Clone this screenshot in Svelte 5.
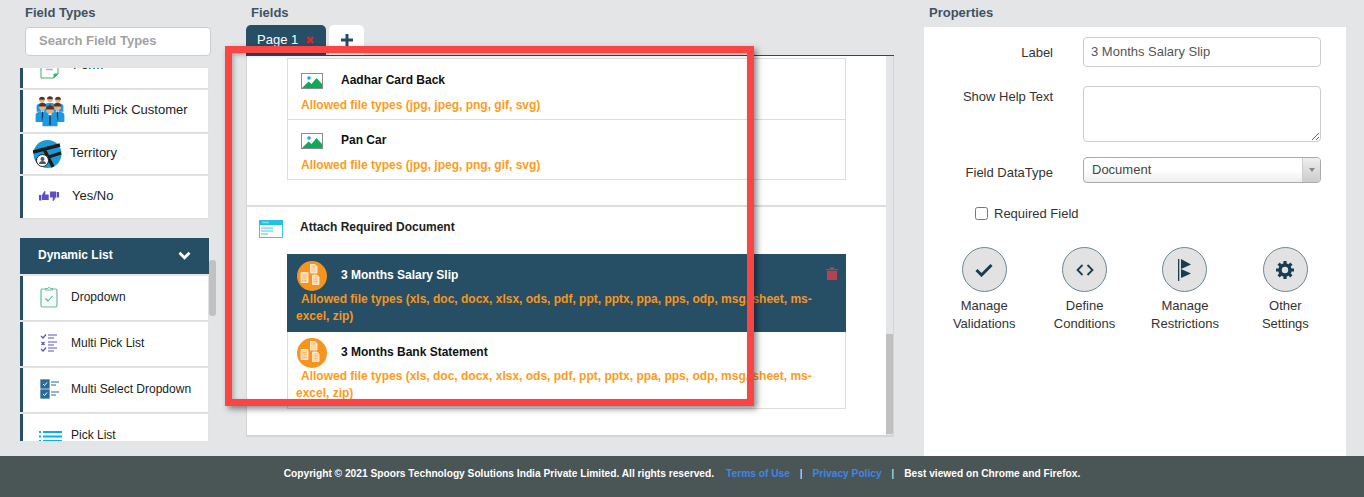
<script lang="ts">
  const imageFields = [{ name: 'Aadhar Card Back' }, { name: 'Pan Car' }];
  const imageTypes = 'Allowed file types (jpg, jpeg, png, gif, svg)';
  const docTypes =
    'Allowed file types (xls, doc, docx, xlsx, ods, pdf, ppt, pptx, ppa, pps, odp, msg, sheet, ms-excel, zip)';
  const docFields = [
    { name: '3 Months Salary Slip', active: true },
    { name: '3 Months Bank Statement', active: false }
  ];
  const actions = [
    { icon: 'check', lines: ['Manage', 'Validations'] },
    { icon: 'code', lines: ['Define', 'Conditions'] },
    { icon: 'flag', lines: ['Manage', 'Restrictions'] },
    { icon: 'gear', lines: ['Other', 'Settings'] }
  ];
</script>

{#snippet person(x, y, s)}
  <path d="M{x - 6 * s} {y + 13 * s}v{-6 * s}q0 {-3 * s} {6 * s} {-3.400 * s}q{6 * s} {0.400 * s} {6 * s} {3.400 * s}v{6 * s}z" fill="#1f9ae0" />
  <path d="M{x - 1.500 * s} {y + 3 * s}h{3 * s}l{-1.500 * s} {3 * s}z" fill="#fff" />
  <path d="M{x - 0.600 * s} {y + 4 * s}h{1.200 * s}v{8 * s}h{-1.200 * s}z" fill="#123a5c" />
  <circle cx={x} cy={y} r={3 * s} fill="#e8b088" />
  <path d="M{x - 3.200 * s} {y - 0.400 * s}a{3.200 * s} {3.200 * s} 0 0 1 {6.400 * s} 0z" fill="#5a3320" />
{/snippet}

<div class="page">
  <main class="main">
    <section class="left">
      <div class="title">Field Types</div>
      <div class="search">Search Field Types</div>
      <div class="types">
        <div class="list">
          <div class="type form-row">
            <svg class="form-icon" width="20" height="11" viewBox="0 0 20 11">
              <path d="M1 0v10h13l4-4V0" fill="none" stroke="#3bb56c" stroke-width="1" />
              <path d="M6 1.500h7" stroke="#b5b5b5" stroke-width="1.600" />
              <path d="M14 10V6h4" fill="#3bb56c" stroke="#3bb56c" />
            </svg>
            <span>Form</span>
          </div>
          <div class="type h42 big">
            <svg class="ic-people" width="32" height="31" viewBox="0 0 32 31">
              {@render person(8, 4, 0.9)}
              {@render person(16, 3.500, 0.9)}
              {@render person(24, 4, 0.9)}
              {@render person(8.500, 11, 1.150)}
              {@render person(23.500, 11, 1.150)}
              {@render person(16, 14, 1.250)}
            </svg>
            <span class="t-customer">Multi Pick Customer</span>
          </div>
          <div class="type h40 big">
            <svg class="ic-territory" width="29" height="28" viewBox="0 0 29 28">
              <circle cx="14.500" cy="14" r="14" fill="#1b9ad6" />
              <path d="M0 12 L27 5 M3 21 L28 13 M11 9 L20 27" stroke="#1c1c1c" stroke-width="3.400" fill="none" />
              <circle cx="9.500" cy="20.500" r="6" fill="#fff" stroke="#222" />
              <circle cx="9.500" cy="19" r="2" fill="#555" />
              <path d="M6 24a3.500 3 0 0 1 7 0z" fill="#555" />
            </svg>
            <span class="t-territory">Territory</span>
          </div>
          <div class="type h42 big">
            <svg class="ic-thumbs" width="20" height="12" viewBox="0 0 20 12">
              <path d="M0 5h2.400v5.500H0zM3 5l2.500-4 1 .4-.4 3h3.600v5.600H3z" fill="#5a4fc4" />
              <path d="M20 2h-2.400v5.500H20zM11 1.500h6v5.500l-2.500 4-1-.4.400-3H11z" fill="#5a4fc4" />
            </svg>
            <span class="t-yes">Yes/No</span>
          </div>

          <div class="group">
            <span>Dynamic List</span>
            <svg width="13" height="9" viewBox="0 0 13 9">
              <path d="M1.500 1.800 6.500 6.800 11.500 1.800" fill="none" stroke="#fff" stroke-width="2.800" />
            </svg>
          </div>

          <div class="type h44">
            <svg class="ic" width="18" height="22" viewBox="0 0 18 22">
              <rect x="1" y="3" width="16" height="18" rx="1.500" fill="#f6fbf9" stroke="#6cb8a0" stroke-width="1.200" />
              <path d="M5.500 4V2.500h2.200a1.500 1.500 0 0 1 2.800 0h2V4z" fill="#fff" stroke="#6cb8a0" />
              <path d="M5.500 12.500 8 15l4.500-5" fill="none" stroke="#55b295" stroke-width="1.100" />
            </svg>
            <span>Dropdown</span>
          </div>
          <div class="type h44">
            <svg class="ic" width="18" height="20" viewBox="0 0 18 20">
              <path d="M1 3l2 2 3-3.500M1 16l2 2 3-3.500M1.500 9l3 3m0-3-3 3" fill="none" stroke="#5a4fc4" stroke-width="1.200" />
              <path d="M8 2h9M8 5h6M8 9h9M8 12h6M8 15h9M8 18h6" stroke="#5a4fc4" stroke-width="1.100" />
            </svg>
            <span>Multi Pick List</span>
          </div>
          <div class="type h44">
            <svg class="ic" width="20" height="20" viewBox="0 0 20 20">
              <rect x="1" y="1" width="8" height="8" fill="#2b6a94" stroke="#2b6a94" stroke-width="1.300" />
              <rect x="1" y="11" width="8" height="8" fill="#2b6a94" stroke="#2b6a94" stroke-width="1.300" />
              <path d="M3 5l1.500 1.500L7 3.500M3 15l1.500 1.500L7 13.500" fill="none" stroke="#fff" />
              <path d="M11 3h8M11 6h5M11 13h8M11 16h5" stroke="#2b6a94" stroke-width="1.100" />
            </svg>
            <span>Multi Select Dropdown</span>
          </div>
          <div class="type h44 last">
            <svg class="ic" width="23" height="16" viewBox="0 0 23 16">
              <path d="M0 2h2M4 2h19M0 6.500h2M4 6.500h19M0 11h2M4 11h19" stroke="#08aef0" stroke-width="2" />
            </svg>
            <span>Pick List</span>
          </div>
        </div>
        <div class="track"><div class="thumb"></div></div>
      </div>
    </section>

    <section class="center">
      <div class="title">Fields</div>
      <div class="tabs">
        <div class="tab active">Page 1 <span class="x">✖</span></div>
        <div class="tab add">
          <svg width="12" height="12" viewBox="0 0 12 12">
            <path d="M6 0v12M0 6h12" stroke="#264f66" stroke-width="3" />
          </svg>
        </div>
      </div>
      <div class="panel">
        <div class="content">
          <div class="card top-card">
            {#each imageFields as f}
              <div class="row image-row">
                <div class="row-head">
                  <svg class="pic" width="22" height="16" viewBox="0 0 22 16">
                    <rect x="0.500" y="0.500" width="21" height="15" fill="#fff" stroke="#8c8c8c" />
                    <circle cx="8" cy="5" r="1.800" fill="#17a9f0" />
                    <path d="M1 15 7.500 8.500 10.500 11 15.500 5 21 11v4z" fill="#0fa958" />
                  </svg>
                  <span class="name">{f.name}</span>
                </div>
                <div class="types-note image-note">{imageTypes}</div>
              </div>
            {/each}
          </div>
          <div class="divider"></div>
          <div class="section-head">
            <svg width="24" height="18" viewBox="0 0 24 18">
              <rect x="0.500" y="0.500" width="23" height="17" fill="#fff" stroke="#3cc7ea" />
              <rect x="0" y="0" width="24" height="5" fill="#22bfe6" />
              <path d="M3 2.500h7M2 8h12M2 11h12M2 14h7" stroke="#7fdcf2" stroke-width="1.400" />
            </svg>
            <span>Attach Required Document</span>
          </div>
          <div class="card doc-card">
            {#each docFields as f}
              <div class="row doc-row" class:active={f.active}>
                <div class="row-head">
                  <svg width="30" height="30" viewBox="0 0 30 30">
                    <circle cx="15" cy="15" r="15" fill="#f7941d" />
                    <path d="M4 11.500h7v10H4zM13.500 3.500H18l2 2V12h-6.500zM15.500 14H20l2 2v7.500h-6.500z" fill="#fbd7a8" stroke="#fff" stroke-width="0.700" />
                    <path d="M5.500 14.500h4M5.500 17h4M5.500 19.500h4M15.500 6h2.500M17.500 18h3M17.500 20.500h3" stroke="#f2b063" stroke-width="0.800" />
                  </svg>
                  <span class="name">{f.name}</span>
                  {#if f.active}
                    <svg class="trash" width="12" height="13" viewBox="0 0 12 13">
                      <path d="M0 2h12v1.300H0zM4 .3h4V2H4zM1 4h10v9H1z" fill="#b5434f" />
                    </svg>
                  {/if}
                </div>
                <div class="types-note doc-note">{docTypes}</div>
              </div>
            {/each}
          </div>
        </div>
        <div class="bar"><div class="bar-thumb"></div></div>
      </div>
    </section>

    <section class="right">
      <div class="title">Properties</div>
      <div class="props">
        <div class="form">
          <span class="lbl">Label</span>
          <input class="field" value="3 Months Salary Slip" />
          <span class="lbl help">Show Help Text</span>
          <textarea class="field area"></textarea>
          <span class="lbl dt">Field DataType</span>
          <div class="select">
            <span>Document</span>
            <div class="caret"><i></i></div>
          </div>
        </div>
        <label class="req"><input type="checkbox" /> <span>Required Field</span></label>
        <div class="actions">
          {#each actions as a}
            <div class="action">
              <div class="circle">
                {#if a.icon === 'check'}
                  <svg width="18" height="14" viewBox="0 0 18 14">
                    <path d="M1.500 7 6.500 12 16.500 2" fill="none" stroke="#183d52" stroke-width="3" />
                  </svg>
                {:else if a.icon === 'code'}
                  <svg width="18" height="12" viewBox="0 0 18 12">
                    <path d="M6.500 1 1.500 6l5 5M11.500 1l5 5-5 5" fill="none" stroke="#183d52" stroke-width="1.800" />
                  </svg>
                {:else if a.icon === 'flag'}
                  <svg width="14" height="22" viewBox="0 0 14 22">
                    <path d="M0 0h1.300v22H0z" fill="#183d52" />
                    <path d="M3 0l10 5.500L3 10zM3 10l10 4.500L3 19z" fill="#183d52" />
                  </svg>
                {:else}
                  <svg width="18" height="18" viewBox="0 0 18 18">
                    <circle cx="9" cy="9" r="5" fill="none" stroke="#183d52" stroke-width="3.600" />
                    <path d="M9 0v3M9 15v3M0 9h3M15 9h3M2.600 2.600l2.200 2.200M13.200 13.200l2.200 2.200M15.400 2.600l-2.200 2.200M4.800 13.200l-2.200 2.200" stroke="#183d52" stroke-width="3.200" />
                  </svg>
                {/if}
              </div>
              <div class="action-label">
                {#each a.lines as line}<div>{line}</div>{/each}
              </div>
            </div>
          {/each}
        </div>
      </div>
    </section>
  </main>

  <footer class="footer">
    <span>Copyright © 2021 Spoors Technology Solutions India Private Limited. All rights reserved.</span>
    <a class="first" href="#terms">Terms of Use</a>
    <span class="sep">|</span>
    <a href="#privacy">Privacy Policy</a>
    <span class="sep">|</span>
    <span>Best viewed on Chrome and Firefox.</span>
  </footer>

  <div class="highlight"></div>
</div>

<style>
  :global(body) { margin: 0; background: #e4e5e7; }
  .page {
    position: relative;
    height: 497px;
    overflow: hidden;
    display: flex;
    flex-direction: column;
    font-family: "Liberation Sans", Arial, sans-serif;
    font-size: 12px;
    color: #222;
  }
  .main { height: 456px; display: flex; align-items: flex-start; padding-left: 20px; }
  .title { font-weight: bold; color: #3d5364; line-height: 14px; padding: 6px 0 0 5px; height: 21px; font-size: 13px; }

  .left { width: 196px; }
  .search {
    margin: 0 0 12px 5px;
    width: 184px;
    height: 27px;
    border: 1px solid #ccc;
    border-radius: 4px;
    background: #fff;
    color: #a3a3a3;
    font-weight: bold;
    font-size: 13px;
    line-height: 26px;
    text-indent: 13px;
  }
  .types { display: flex; height: 373px; overflow: hidden; }
  .list { width: 189px; }
  .type {
    position: relative;
    display: flex;
    align-items: center;
    box-sizing: border-box;
    width: 188px;
    margin-bottom: 2px;
    padding-bottom: 2px;
    background: #fff;
    border-left: 3px solid #264f66;
    box-shadow: 0 1px 1px #ddd;
  }
  .big { font-size: 13px; padding-bottom: 4px; }
  .form-row { height: 20px; overflow: hidden; align-items: flex-start; padding-bottom: 0; font-size: 13px; }
  .form-icon { margin-left: 17px; flex: none; }
  .form-row span { margin: -11px 0 0 13px; }
  .h42 { height: 42px; }
  .h40 { height: 40px; }
  .h44 { height: 44px; }
  .last { height: 50px; align-items: flex-start; padding-top: 14px; }
  .last .ic { margin-left: 16px; margin-top: 2px; }
  .ic-people { margin: 4px 0 0 11px; flex: none; }
  .t-customer { margin-left: 6px; }
  .ic-territory { margin: 3px 0 0 10px; flex: none; }
  .t-territory { margin-left: 8px; }
  .ic-thumbs { margin: 2px 0 0 16px; flex: none; }
  .t-yes { margin-left: 13px; }
  .ic { margin-left: 17px; flex: none; }
  .type .ic + span { position: absolute; left: 48px; }
  .group {
    margin-top: 20px;
    margin-bottom: 2px;
    width: 189px;
    height: 36px;
    padding: 0 18px 2px;
    background: #264f66;
    color: #fff;
    font-weight: bold;
    display: flex;
    align-items: center;
    justify-content: space-between;
    box-sizing: border-box;
  }
  .track { width: 7px; }
  .thumb { margin-top: 192px; height: 56px; width: 7px; background: #c1c1c1; border-radius: 3px; }

  .center { width: 648px; margin-left: 30px; }
  .center .title { height: 19px; }
  .tabs { display: flex; gap: 3px; height: 30px; border-bottom: 1px solid #2c4a5a; }
  .tab { height: 30px; border-radius: 5px 5px 0 0; box-sizing: border-box; }
  .active.tab { width: 80px; background: #264f66; color: #fff; padding: 8px 0 0 11px; font-size: 13px; line-height: 14px; }
  .x { color: #d9232e; font-size: 11px; margin-left: 3px; }
  .add { width: 35px; background: #fff; display: flex; align-items: center; justify-content: center; }
  .panel {
    display: flex;
    height: 381px;
    background: #fff;
    border: 1px solid #d5d5d5;
    border-top: 0;
    border-bottom-width: 2px;
    box-sizing: border-box;
    overflow: hidden;
  }
  .content { flex: 1; padding-top: 2px; min-width: 0; }
  .card { margin: 0 40px; border: 1px solid #ddd; border-top: 0; box-sizing: border-box; }
  .top-card { border-top: 1px solid #ddd; height: 122px; }
  .row { box-sizing: border-box; }
  .image-row { height: 61px; border-bottom: 1px solid #ddd; padding-top: 14px; }
  .image-row:last-child { height: 59px; border-bottom: 0; padding-top: 13px; }
  .row-head { position: relative; display: flex; align-items: center; }
  .image-row .row-head { padding-left: 13px; height: 16px; }
  .name { font-weight: bold; color: #111; }
  .image-row .name { margin: -2px 0 0 18px; }
  .types-note { color: #fb9c1c; font-weight: bold; line-height: 17px; }
  .image-note { margin: 8px 0 0 13px; }
  .divider { margin-top: 25px; height: 2px; background: #ddd; }
  .section-head { display: flex; align-items: center; height: 40px; margin-bottom: 7px; padding-left: 12px; gap: 17px; font-weight: bold; color: #222; }
  .section-head svg { margin-top: 4px; }
  .doc-card { border-top: 0; height: 155px; border-bottom: 1px solid #ddd; }
  .doc-row { margin: 0 -1px; padding: 7px 8px 0 9px; height: 78px; }
  .doc-row + .doc-row { height: 76px; padding-top: 6px; }
  .doc-row .row-head { padding-left: 1px; height: 30px; }
  .doc-row .name { margin: -2px 0 0 14px; }
  .doc-row.active { background: #264f66; }
  .doc-row.active .name { color: #fff; }
  .doc-note { margin-top: 0; text-indent: 5px; }
  .doc-row.active .doc-note { color: #f7961d; }
  .trash { position: absolute; right: 0; top: 6px; }
  .bar { width: 7px; background: #e4e5e7; }
  .bar-thumb { margin-top: 278px; height: 100px; background: #c1c1c1; }

  .right { width: 422px; margin-left: 30px; }
  .props { height: 429px; background: #fff; padding: 10px 10px 0 10px; box-sizing: border-box; font-size: 13px; }
  .form { display: grid; grid-template-columns: 119px 238px; column-gap: 30px; align-items: start; }
  .lbl { text-align: right; color: #333; line-height: 14px; }
  .lbl:first-child { padding-top: 9px; }
  .help { padding-top: 4px; margin-top: 19px; }
  .dt { margin-top: 24px; }
  .field {
    box-sizing: border-box;
    width: 238px;
    height: 30px;
    padding: 0 7px 2px;
    border: 1px solid #ccc;
    border-radius: 4px;
    font: 13px "Liberation Sans", Arial, sans-serif;
    color: #555;
    outline: 0;
  }
  .area { height: 56px; margin-top: 19px; display: block; }
  .select {
    box-sizing: border-box;
    margin-top: 15px;
    height: 26px;
    border: 1px solid #aaa;
    border-radius: 4px;
    background: linear-gradient(#fff 50%, #eee);
    display: flex;
    justify-content: space-between;
    padding-left: 8px;
    line-height: 24px;
    color: #444;
  }
  .caret { width: 17px; border-left: 1px solid #ccc; background: linear-gradient(#eee, #ccc); display: flex; align-items: center; justify-content: center; border-radius: 0 3px 3px 0; }
  .caret i { border: 3.500px solid transparent; border-top: 4px solid #888; border-bottom: 0; }
  .req { display: flex; align-items: center; gap: 6px; margin: 23px 0 0 41px; height: 15px; color: #333; }
  .req input { margin: 0; width: 13px; height: 13px; }
  .actions { display: grid; grid-template-columns: repeat(4, 100.4px); margin-top: 26px; }
  .action { display: flex; flex-direction: column; align-items: center; }
  .circle {
    box-sizing: border-box;
    width: 45px;
    height: 45px;
    border-radius: 50%;
    border: 1px solid #6d8590;
    background: #e2e2e2;
    display: flex;
    align-items: center;
    justify-content: center;
  }
  .action-label { margin-top: 5px; text-align: center; line-height: 18px; color: #333; }

  .footer {
    box-sizing: border-box;
    height: 41px;
    padding-bottom: 7px;
    background: #4a5556;
    color: #fff;
    display: flex;
    align-items: center;
    justify-content: center;
    font-size: 10.2px;
    font-weight: bold;
  }
  .footer a { color: #3d87ea; text-decoration: none; }
  .first { margin-left: 12px; }
  .sep { margin: 0 10px; font-weight: normal; }

  .highlight {
    position: absolute;
    left: 225px;
    top: 46px;
    width: 515px;
    height: 346px;
    border: 7px solid #fb4444;
    box-shadow: 3px 3px 6px rgba(0, 0, 0, 0.45), inset 2px 2px 4px rgba(0, 0, 0, 0.25);
    pointer-events: none;
  }
</style>
